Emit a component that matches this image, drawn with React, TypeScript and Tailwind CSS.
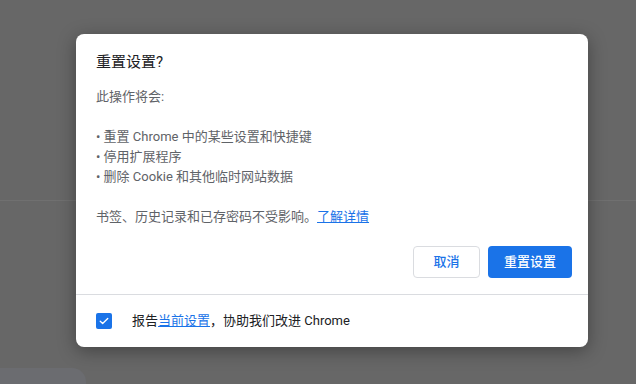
export default function App() {
  return (
    <div
      className="relative h-[384px] w-[636px] overflow-hidden bg-[#676767]"
      style={{ fontFamily: 'Roboto, "Noto Sans CJK SC", sans-serif' }}
    >
      {/* page behind the scrim */}
      <div className="flex h-full flex-col">
        <div className="h-[200px]" />
        <div className="h-px bg-[#707070]" />
        <div className="flex-1" />
        <div className="h-[16px] w-[86px] rounded-tr-[14px] bg-[#6b6c70]" />
      </div>

      {/* dialog */}
      <div className="absolute left-[76px] top-[34px] w-[512px] overflow-hidden rounded-[8px] bg-white shadow-[0_4px_18px_rgba(0,0,0,0.35)]">
        <div className="px-5 pt-[18px]">
          <h2 className="text-[15px] leading-[20px] text-[#202124]">重置设置?</h2>
          <div className="mt-[15px] text-[13px] leading-[20px] text-[#5f6368]">
            <p>此操作将会:</p>
            <p className="h-[20px]" />
            <p>• 重置 Chrome 中的某些设置和快捷键</p>
            <p>• 停用扩展程序</p>
            <p>• 删除 Cookie 和其他临时网站数据</p>
            <p className="h-[20px]" />
            <p>
              书签、历史记录和已存密码不受影响。
              <a className="text-[#1a73e8] underline">了解详情</a>
            </p>
          </div>
        </div>
        <div className="flex justify-end gap-2 px-4 pb-4 pt-[19px]">
          <button className="h-[32px] w-[67px] rounded-[4px] border border-[#dadce0] bg-white text-[13px] font-medium text-[#1a73e8]">
            取消
          </button>
          <button className="h-[32px] w-[84px] rounded-[4px] bg-[#1a73e8] text-[13px] font-medium text-white">
            重置设置
          </button>
        </div>
        <div className="h-px bg-[#dadce0]" />
        <div className="flex h-[52px] items-center gap-5 px-5">
          <span className="flex h-[16px] w-[16px] items-center justify-center rounded-[2px] bg-[#1a73e8]">
            <svg viewBox="0 0 16 16" className="h-[12px] w-[12px]" fill="none">
              <path d="M3 8.3l3.2 3L13 4.6" stroke="white" strokeWidth="1.8" strokeLinecap="round" strokeLinejoin="round" />
            </svg>
          </span>
          <p className="text-[13px] leading-[20px] text-[#202124]">
            报告<a className="text-[#1a73e8] underline">当前设置</a>，协助我们改进 Chrome
          </p>
        </div>
      </div>
    </div>
  );
}
